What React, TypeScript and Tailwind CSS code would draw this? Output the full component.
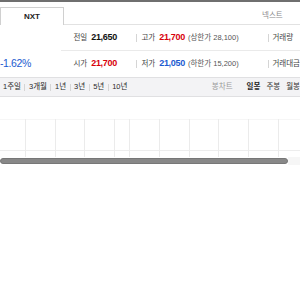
import React from "react";

const FONT = { fontFamily: '"Liberation Sans", "Noto Sans CJK KR", sans-serif' };

function Sep({ h = "h-[8px]", c = "bg-[#d5d5d5]" }: { h?: string; c?: string }) {
  return <span className={`w-px ${h} ${c} shrink-0`} />;
}

export default function App() {
  const vx = [25.5, 55.5, 84.5, 114.5, 129.5, 159.5, 189.5, 218.5, 248.5, 278.5];
  return (
    <div className="w-[300px] h-[300px] bg-white overflow-hidden flex flex-col" style={FONT}>
      <div className="h-[2px] bg-[#6f6f6f] shrink-0" />
      {/* tab row */}
      <div className="h-[23px] flex items-end shrink-0">
        <div className="w-[64px] h-[18px] border border-b-0 border-[#d0d0d0] flex items-center justify-center text-[8px] font-bold text-[#222]">
          NXT
        </div>
        <div className="flex-1 h-full border-b border-[#e2e2e2] flex items-center pl-[198px] pt-[5px] whitespace-nowrap text-[7.5px] text-[#888]">
          넥스트
        </div>
      </div>
      {/* info */}
      <div className="flex shrink-0">
        <div className="w-[63px] flex flex-col justify-end">
          <div className="h-[25px] flex items-center text-[10.5px] text-[#1c5bd0] tracking-[-0.4px] whitespace-nowrap">
            -1.62%
          </div>
        </div>
        <div className="flex-1 flex flex-col">
          <div className="h-[26px] border-b border-[#eaeaea] flex items-center pl-[12px] whitespace-nowrap">
            <div className="w-[63px] flex items-center gap-[4px]">
              <span className="text-[7.5px] text-[#444]">전일</span>
              <span className="text-[9px] font-bold text-[#111] tracking-[-0.3px]">21,650</span>
            </div>
            <Sep />
            <div className="ml-[4px] w-[127px] flex items-center">
              <span className="text-[7.5px] text-[#444]">고가</span>
              <span className="ml-[4px] text-[9px] font-bold text-[#d8000c] tracking-[-0.3px]">21,700</span>
              <span className="ml-[3px] text-[7.5px] text-[#555]">(상한가 28,100)</span>
            </div>
            <Sep />
            <span className="ml-[3px] text-[7.5px] text-[#444]">거래량</span>
          </div>
          <div className="h-[25px] flex items-center pl-[12px] whitespace-nowrap">
            <div className="w-[63px] flex items-center gap-[4px]">
              <span className="text-[7.5px] text-[#444]">시가</span>
              <span className="text-[9px] font-bold text-[#d8000c] tracking-[-0.3px]">21,700</span>
            </div>
            <Sep />
            <div className="ml-[4px] w-[127px] flex items-center">
              <span className="text-[7.5px] text-[#444]">저가</span>
              <span className="ml-[4px] text-[9px] font-bold text-[#1c5bd0] tracking-[-0.3px]">21,050</span>
              <span className="ml-[3px] text-[7.5px] text-[#555]">(하한가 15,200)</span>
            </div>
            <Sep />
            <span className="ml-[3px] text-[7.5px] text-[#444]">거래대금</span>
          </div>
        </div>
      </div>
      {/* toolbar */}
      <div className="h-[20px] mt-px shrink-0 bg-[#f3f3f5] border-t border-b border-[#e0e0e2] flex items-center whitespace-nowrap text-[7.5px] text-[#2a2a2a]">
        <div className="w-[214px] pl-[3px] flex items-center gap-[3.5px]">
          <span>1주일</span>
          <Sep h="h-[7px]" />
          <span>3개월</span>
          <Sep h="h-[7px]" />
          <span>1년</span>
          <Sep h="h-[7px]" />
          <span>3년</span>
          <Sep h="h-[7px]" />
          <span>5년</span>
          <Sep h="h-[7px]" />
          <span>10년</span>
        </div>
        <div className="flex items-center">
          <span className="text-[#999]">봉차트</span>
          <span className="ml-[14px] font-bold text-[#222]">일봉</span>
          <span className="mx-[3px]"><Sep h="h-[7px]" /></span>
          <span className="text-[#333]">주봉</span>
          <span className="mx-[3px]"><Sep h="h-[7px]" /></span>
          <span className="text-[#333]">월봉</span>
        </div>
      </div>
      {/* chart grid */}
      <div className="h-[22px] shrink-0" />
      <svg width="300" height="38" className="block shrink-0">
        <line x1="0" y1="0.5" x2="300" y2="0.5" stroke="#f6f6f6" strokeWidth="1" />
        <line x1="0" y1="31.5" x2="300" y2="31.5" stroke="#ededed" strokeWidth="1" />
        {vx.map((x) => (
          <line key={x} x1={x} y1="0" x2={x} y2="38" stroke="#ebebeb" strokeWidth="1" />
        ))}
      </svg>
      {/* scrollbar */}
      <div className="flex items-center h-[8px] shrink-0">
        <div className="w-[288px] h-[6px] rounded-full bg-[#888888] border border-[#777777]" />
        <div className="flex-1 h-full bg-[#f6f6f6]" />
      </div>
      <div className="flex-1" />
    </div>
  );
}
